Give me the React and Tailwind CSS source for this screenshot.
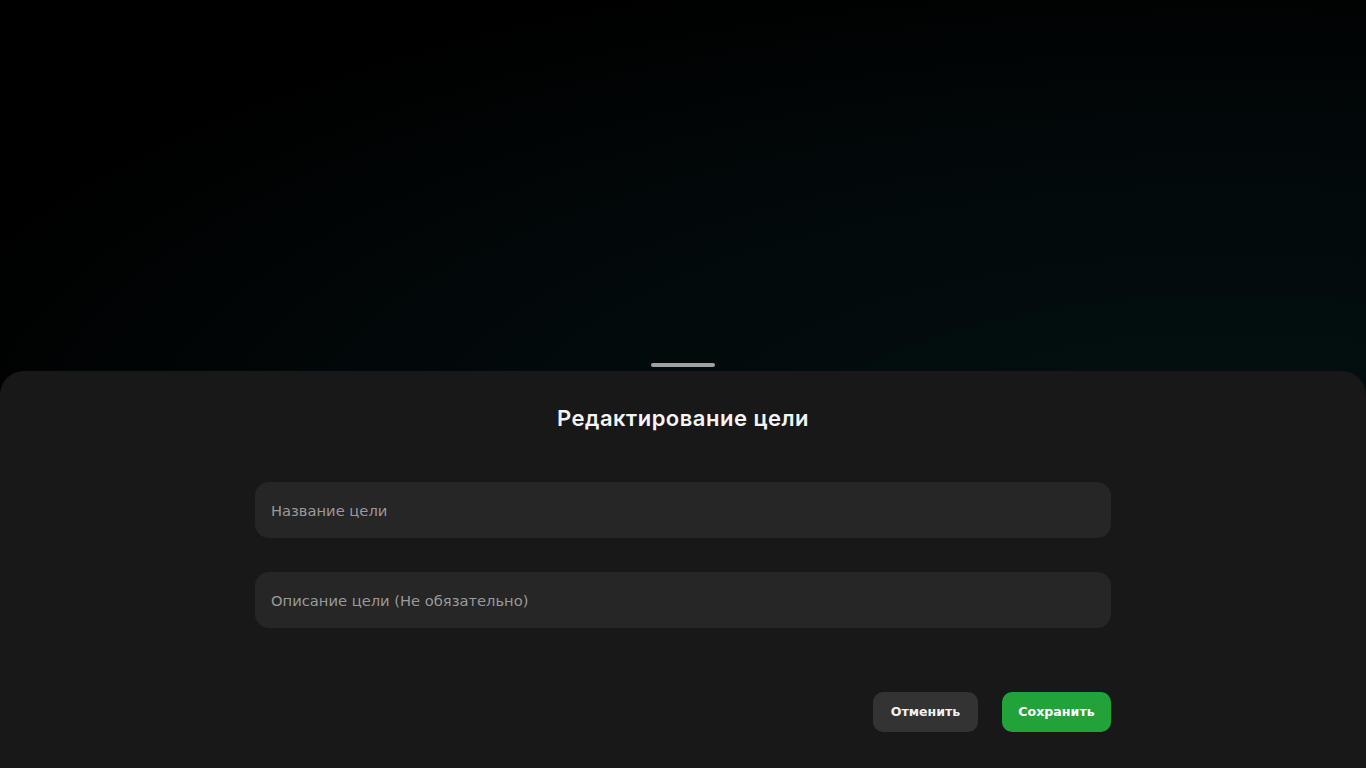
import React from 'react';

export default function App() {
  return (
    <div className="relative w-full h-[768px] overflow-hidden bg-[radial-gradient(ellipse_at_90%_60%,#031110_0%,#02090b_45%,#000000_80%)] flex flex-col justify-end">
      {/* Bottom sheet */}
      <div className="relative h-[397px] bg-[#181818] rounded-t-[24px] flex flex-col items-center">
        <div className="absolute -top-[8px] left-1/2 -translate-x-1/2 w-16 h-1 rounded-full bg-[#a0a0a0]" />
        <h2 className="mt-[33px] text-[22px] leading-7 font-semibold text-[#f4f4f4] tracking-[0.5px] font-['Inter','Noto_Sans',sans-serif]">
          Редактирование цели
        </h2>

        <div className="mt-[50px] w-[856px] flex flex-col gap-[34px] font-['DejaVu_Sans','Noto_Sans',sans-serif]">
          <input
            className="h-14 w-full rounded-[14px] bg-[#262626] px-4 text-[14.7px] text-white placeholder-[#9a9a9a] outline-none"
            placeholder="Название цели"
          />
          <input
            className="h-14 w-full rounded-[14px] bg-[#262626] px-4 text-[14.7px] text-white placeholder-[#9a9a9a] outline-none"
            placeholder="Описание цели (Не обязательно)"
          />
        </div>

        <div className="mt-[64px] w-[856px] flex justify-end gap-6 font-['DejaVu_Sans','Noto_Sans',sans-serif]">
          <button className="h-10 w-[105px] rounded-[10px] bg-[#333333] text-[12.6px] font-bold text-[#f0f0f0]">
            Отменить
          </button>
          <button className="h-10 w-[109px] rounded-[10px] bg-[#22a33a] text-[12.6px] font-bold text-white">
            Сохранить
          </button>
        </div>
      </div>
    </div>
  );
}
